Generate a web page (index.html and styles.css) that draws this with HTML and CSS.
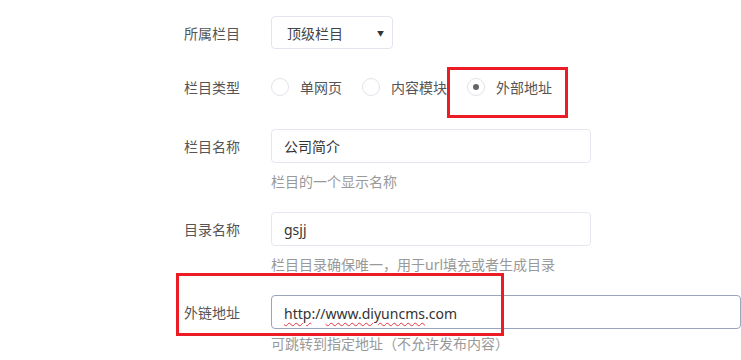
FILE: index.html
```html
<!DOCTYPE html>
<html lang="zh-CN">
<head>
  <meta charset="UTF-8">
  <title>栏目设置</title>
  <link rel="stylesheet" href="styles.css">
</head>
<body>
  <div class="form">
    <div class="row">
      <label class="label">所属栏目</label>
      <div class="select">
        <span>顶级栏目</span>
        <span class="arrow">&#9660;</span>
      </div>
    </div>

    <div class="row row-radio">
      <label class="label">栏目类型</label>
      <div class="radios">
        <span class="radio"><i class="circle"></i>单网页</span>
        <span class="radio"><i class="circle"></i>内容模块</span>
        <span class="radio"><i class="circle checked"></i>外部地址</span>
      </div>
    </div>

    <div class="group">
      <div class="row">
        <label class="label">栏目名称</label>
        <div class="input">公司简介</div>
      </div>
      <div class="help">栏目的一个显示名称</div>
    </div>

    <div class="group">
      <div class="row">
        <label class="label">目录名称</label>
        <div class="input">gsjj</div>
      </div>
      <div class="help">栏目目录确保唯一，用于url填充或者生成目录</div>
    </div>

    <div class="group">
      <div class="row">
        <label class="label">外链地址</label>
        <div class="input input-wide focus"><span class="typo">http</span>://<span class="typo">www.diyuncms</span>.com</div>
      </div>
      <div class="help help-tight">可跳转到指定地址（不允许发布内容）</div>
    </div>
  </div>

  <div class="mark mark-type"></div>
  <div class="mark mark-link"></div>
</body>
</html>
```

FILE: styles.css
```css
html, body { overflow: hidden; }
body { margin: 0; background: #fff; color: #555; font-family: "Noto Sans", "Noto Sans CJK SC", sans-serif; font-size: 14px; }
.form { padding: 16px 0 0 184px; }
.row { display: flex; align-items: center; }
.label { width: 87px; flex-shrink: 0; color: #555; }
.select { width: 122px; height: 33px; box-sizing: border-box; border: 1px solid #e4e4ee; border-radius: 4px; padding: 0 6px 0 15px; display: flex; align-items: center; justify-content: space-between; color: #444; }
.arrow { font-size: 7px; color: #333; margin: 1px 2px 0 0; }
.row-radio { height: 36px; margin: 20px 0 24px; }
.radios { display: flex; align-items: center; }
.radio { display: flex; align-items: center; margin-right: 20px; color: #555; }
.circle { width: 18px; height: 18px; box-sizing: border-box; border: 1px solid #e2e2ec; border-radius: 50%; margin-right: 11px; position: relative; }
.circle.checked::after { content: ""; position: absolute; left: 5px; top: 5px; width: 6px; height: 6px; border-radius: 50%; background: #666; }
.group { margin-bottom: 20px; }
.input { width: 320px; height: 34px; box-sizing: border-box; border: 1px solid #e6e6f0; border-radius: 4px; padding: 0 12px; display: flex; align-items: center; color: #333; }
.input-wide { width: 520px; }
.input.focus { border-color: #9aa4ba; padding-top: 2px; }
.typo { text-decoration: underline wavy #e8323a; text-decoration-thickness: 1px; text-underline-offset: 3px; }
.help { margin: 9px 0 0 87px; line-height: 20px; color: #999; }
.help-tight { margin-top: 5px; }
.mark { position: absolute; border: 3px solid #ec1c24; }
.mark-type { left: 447px; top: 67px; width: 115px; height: 45px; }
.mark-link { left: 176px; top: 273px; width: 322px; height: 57px; }
```
